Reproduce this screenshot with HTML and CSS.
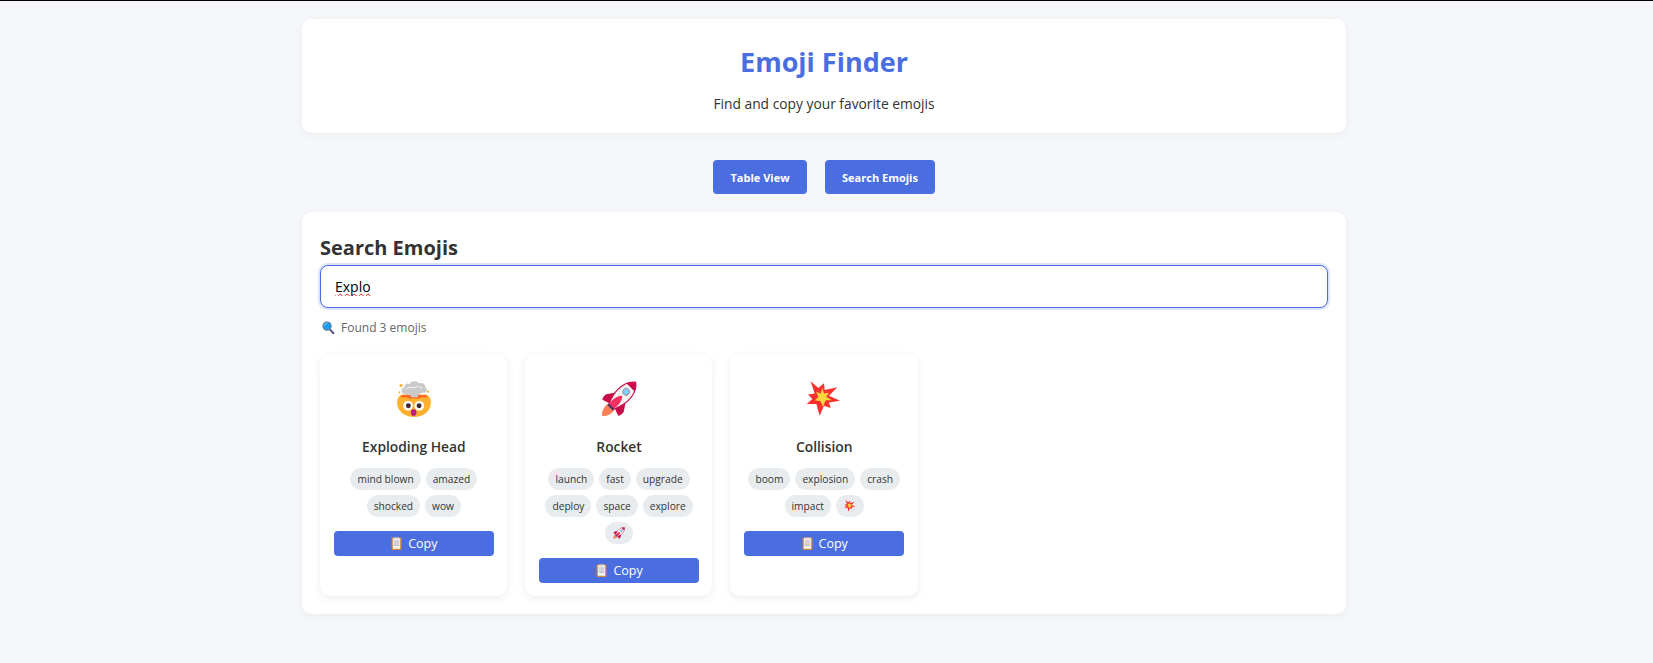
FILE: index.html

```html
<!DOCTYPE html>
<html lang="en">
<head>
    <meta charset="UTF-8">
    <meta name="viewport" content="width=device-width, initial-scale=1.0">
    <title>Emoji Finder</title>
    <link rel="stylesheet" href="styles.css">
</head>
<body>
    <!-- shared emoji drawings -->
    <svg class="defs" aria-hidden="true">
        <symbol id="e-head" viewBox="0 0 32 32">
            <path d="M1 19C1 15 3 12.500 6 12H26C29 12.500 31 15 31 19C31 27 24 32 16 32C8 32 1 27 1 19Z" fill="#FFB02E"/>
            <path d="M6 12.500H26C27.500 13 28 14 27.500 14.800C25 14 21 14.500 19 16C18 15 14 15 13 16C11 14.500 7 14 4.500 14.800C4 14 4.500 13 6 12.500Z" fill="#FF6723"/>
            <path d="M7 11.500C4 10.500 4 6 7.500 5.500C7.500 2.500 10.500 1.500 12 3C13 -.5 19 -.5 20.500 2C23 1 26.500 2.500 26 5.500C28.500 6.500 27.500 11 24.500 10.500C22 10 21 12 19.500 12.500V14.500H13V12.500C11 12.500 9.500 12 7 11.500Z" fill="#CACACA"/>
            <path d="M9 7C11.500 4.500 14 6.500 16 6C18 5 20 4 23.500 6.500" fill="none" stroke="#F4F4F4" stroke-width=".9"/>
            <circle cx="4.500" cy="4" r="1.400" fill="#FFB02E"/>
            <circle cx="28.500" cy="9.500" r="1" fill="#FFB02E"/>
            <circle cx="3" cy="10" r=".8" fill="#FFB02E"/>
            <circle cx="10.700" cy="22" r="4.300" fill="#fff"/>
            <circle cx="20.700" cy="22" r="4.300" fill="#fff"/>
            <circle cx="11" cy="22" r="2.200" fill="#402A32"/>
            <circle cx="20.500" cy="22" r="2.200" fill="#402A32"/>
            <ellipse cx="15.700" cy="28" rx="2.500" ry="3" fill="#BB1D80"/>
        </symbol>
        <symbol id="e-rocket" viewBox="0 0 32 32">
            <g transform="rotate(45 16 16)">
                <path d="M12 26H20C21 31 18 36.500 16 37C14 36.500 11 31 12 26Z" fill="#FF8257"/>
                <path d="M10.500 13L5 21C4.500 23.500 5 26 6 27L13 24.500ZM21.500 13L27 21C27.500 23.500 27 26 26 27L19 24.500Z" fill="#CA0B4A"/>
                <path d="M16 -5C21.500 -1 22.800 6 22.800 11C22.800 17 20.500 22 19 26H13C11.500 22 9.200 17 9.200 11C9.200 6 10.500 -1 16 -5Z" fill="#F4F4F4" stroke="#CA0B4A" stroke-width="1"/>
                <path d="M16 -5C18.500 -3 20.500 -.5 21.200 1.500H10.800C11.500 -.5 13.500 -3 16 -5Z" fill="#CA0B4A"/>
                <path d="M16 12C19.500 15 20 22 18.800 26H13.200C12 22 12.500 15 16 12Z" fill="#F92F60"/>
                <rect x="12.800" y="25" width="6.400" height="2.200" fill="#533566"/>
                <circle cx="16" cy="7" r="3.400" fill="#9B9B9B"/>
                <circle cx="16" cy="7" r="2.500" fill="#83CBFF"/>
            </g>
        </symbol>
        <symbol id="e-boom" viewBox="0 0 32 32">
            <polygon points="4.100,.3 11,6.200 16,2.100 16.600,8 27.800,5.600 20.400,13 30.200,17.500 20.400,19 21.900,24 16,21.900 12.100,30.800 9.200,20.400 .6,20.400 5.600,16 1.800,12.100 7.700,11" fill="#F8312F"/>
            <polygon points="14.500,6 16,11 20.500,10.500 18,14 23,17 17.500,17 15,23 13,18 8,17 11,14 9,9.500 13,11" fill="#FCD53F"/>
        </symbol>
        <symbol id="e-clip" viewBox="0 0 32 32">
            <rect x="4" y="1" width="24" height="31" rx="2" fill="#D3883E"/>
            <rect x="7" y="3" width="18" height="26" fill="#F4F4F4"/>
            <rect x="10" y="1" width="12" height="4" fill="#D3D3D3"/>
            <path d="M9 10H23M9 15H23M9 20H23" stroke="#B4ACBC" stroke-width="2.500"/>
        </symbol>
        <symbol id="e-search" viewBox="0 0 32 32">
            <path d="M19 20L28 30" stroke="#635994" stroke-width="5.500" stroke-linecap="round"/>
            <circle cx="12.500" cy="12.500" r="11.500" fill="#6B7A8C"/>
            <circle cx="12.500" cy="12.500" r="9" fill="#1C9CF0"/>
            <path d="M6 11C7 7 10 5.500 13 5.500" fill="none" stroke="#A8DCFF" stroke-width="2"/>
        </symbol>
    </svg>

    <div class="page-top"></div>
    <div class="container">
        <header class="card-panel header">
            <h1>Emoji Finder</h1>
            <p>Find and copy your favorite emojis</p>
        </header>

        <nav class="view-buttons">
            <button class="nav-btn">Table View</button>
            <button class="nav-btn nav-btn-search">Search Emojis</button>
        </nav>

        <section class="card-panel search-panel">
            <h2>Search Emojis</h2>
            <input type="text" class="search-input" value="Explo">
            <div class="result-count">
                <svg class="count-icon"><use href="#e-search"/></svg>
                <span>Found 3 emojis</span>
            </div>

            <div class="emoji-grid">
                <div class="emoji-card">
                    <svg class="emoji-big"><use href="#e-head"/></svg>
                    <h3>Exploding Head</h3>
                    <div class="tags">
                        <span class="tag">mind blown</span>
                        <span class="tag">amazed</span>
                        <span class="tag">shocked</span>
                        <span class="tag">wow</span>
                    </div>
                    <button class="copy-btn"><svg class="clip-icon"><use href="#e-clip"/></svg>Copy</button>
                </div>

                <div class="emoji-card">
                    <svg class="emoji-big"><use href="#e-rocket"/></svg>
                    <h3>Rocket</h3>
                    <div class="tags">
                        <span class="tag">launch</span>
                        <span class="tag">fast</span>
                        <span class="tag">upgrade</span>
                        <span class="tag">deploy</span>
                        <span class="tag">space</span>
                        <span class="tag">explore</span>
                        <span class="tag tag-emoji"><svg class="tag-icon"><use href="#e-rocket"/></svg></span>
                    </div>
                    <button class="copy-btn"><svg class="clip-icon"><use href="#e-clip"/></svg>Copy</button>
                </div>

                <div class="emoji-card">
                    <svg class="emoji-big"><use href="#e-boom"/></svg>
                    <h3>Collision</h3>
                    <div class="tags">
                        <span class="tag">boom</span>
                        <span class="tag">explosion</span>
                        <span class="tag">crash</span>
                        <span class="tag">impact</span>
                        <span class="tag tag-emoji"><svg class="tag-icon"><use href="#e-boom"/></svg></span>
                    </div>
                    <button class="copy-btn"><svg class="clip-icon"><use href="#e-clip"/></svg>Copy</button>
                </div>
            </div>
        </section>
    </div>
</body>
</html>
```

FILE: styles.css

```css
body {
    margin: 0;
    padding-right: 5px;
    font-family: "Open Sans", "Noto Sans", sans-serif;
    background-color: #f5f7fa;
    color: #333;
}
.defs {
    display: none;
}
.page-top {
    height: 1px;
    margin-right: -5px;
    background-color: #000;
}
.container {
    width: 1044px;
    margin: 0 auto;
    padding-top: 18px;
    padding-bottom: 49px;
}
.card-panel {
    background-color: white;
    border-radius: 10px;
    box-shadow: 0 2px 10px rgba(0, 0, 0, 0.05);
}
.header {
    height: 114px;
    box-sizing: border-box;
    padding-top: 24px;
    text-align: center;
}
h1 {
    margin: 0;
    font-size: 27px;
    line-height: 38px;
    font-weight: 700;
    color: #4a6ee0;
}
.header p {
    margin: 13px 0 0;
    font-size: 13.800px;
    line-height: 19px;
}
.view-buttons {
    display: flex;
    justify-content: center;
    gap: 18px;
    margin: 27px 0 18px;
}
.nav-btn {
    width: 94px;
    height: 34px;
    padding: 0;
    border: none;
    border-radius: 4px;
    background-color: #4a6ee0;
    color: white;
    font-family: inherit;
    font-size: 11px;
    font-weight: 700;
}
.nav-btn-search {
    width: 110px;
}
.search-panel {
    padding: 18px;
}
h2 {
    margin: 0;
    padding-top: 1px;
    font-size: 20px;
    line-height: 34px;
    font-weight: 700;
}
.search-input {
    display: block;
    box-sizing: border-box;
    width: 100%;
    height: 43px;
    padding: 0 14px;
    border: 1px solid #4a6ee0;
    border-radius: 8px;
    outline: none;
    box-shadow: 0 0 0 2px rgba(74, 110, 224, 0.2);
    font-family: inherit;
    font-size: 14px;
    color: #000;
    text-decoration: underline wavy #e81123 1px;
    text-decoration-skip-ink: none;
    text-underline-offset: 1px;
}
.result-count {
    display: flex;
    align-items: center;
    gap: 6px;
    margin: 10px 0 18px 2px;
    height: 19px;
    font-size: 12px;
    color: #666;
}
.count-icon {
    width: 13px;
    height: 13px;
}
.emoji-grid {
    display: grid;
    grid-template-columns: repeat(auto-fill, minmax(180px, 1fr));
    gap: 18px;
}
.emoji-card {
    box-sizing: border-box;
    padding: 26px 13.500px 13px 14px;
    background-color: white;
    border-radius: 10px;
    box-shadow: 0 2px 8px rgba(0, 0, 0, 0.08);
    text-align: center;
}
.emoji-big {
    display: block;
    width: 36px;
    height: 36px;
    margin: 0 auto;
}
h3 {
    margin: 20px 0 12px;
    font-size: 13.800px;
    line-height: 19px;
    font-weight: 600;
}
.tags {
    display: flex;
    flex-wrap: wrap;
    justify-content: center;
    gap: 5px;
    margin-bottom: 14px;
}
.tag {
    height: 22px;
    padding: 0 7px;
    border-radius: 11px;
    background-color: #e9ecef;
    font-size: 10.200px;
    line-height: 22px;
}
.tag-emoji {
    display: flex;
    align-items: center;
    padding: 0 8px;
}
.tag-icon {
    width: 12px;
    height: 12px;
    display: block;
}
.copy-btn {
    display: flex;
    align-items: center;
    justify-content: center;
    gap: 5px;
    width: 100%;
    height: 25px;
    padding: 0;
    border: none;
    border-radius: 4px;
    background-color: #4a6ee0;
    color: white;
    font-family: inherit;
    font-size: 12.500px;
}
.clip-icon {
    width: 13px;
    height: 13px;
}
```
